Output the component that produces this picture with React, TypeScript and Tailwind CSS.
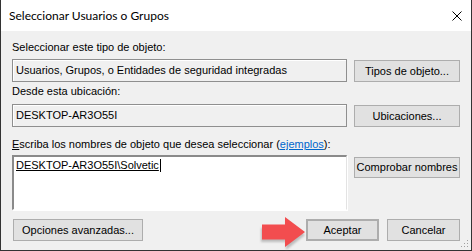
import React from "react";

const sans = { fontFamily: '"Liberation Sans", Arial, sans-serif' };

function Btn({ children, className = "" }: { children: React.ReactNode; className?: string }) {
  return (
    <div
      className={
        "flex items-center justify-center bg-[#e1e1e1] border border-[#adadad] text-[11px] text-black leading-[13px] " +
        className
      }
    >
      {children}
    </div>
  );
}

function ReadField({ text }: { text: string }) {
  return (
    <div className="flex-1 h-[23px] border border-[#8f8f8f] shadow-[inset_1px_1px_0_#ffffff] bg-[#f0f0f0] flex items-center pl-[3px] text-[11px] leading-[13px] text-black">
      {text}
    </div>
  );
}

export default function App() {
  return (
    <div className="w-[472px] h-[251px] bg-white relative overflow-hidden" style={sans}>
      <div className="flex flex-col w-[472px] h-[251px] border-l border-r border-b border-[#333333] bg-[#f0f0f0]">
        {/* Title bar */}
        <div className="h-[31px] bg-white flex items-center justify-between pl-[8px] pr-[10px] shrink-0">
          <span
            className="text-[12px] text-black leading-[16px]"
            style={{ fontFamily: 'Lato, "Noto Sans", sans-serif' }}
          >
            Seleccionar Usuarios o Grupos
          </span>
          <svg width="10" height="10" viewBox="0 0 10 10" className="mr-[-1px]">
            <path d="M0.5 0.5 L9.5 9.5 M9.5 0.5 L0.5 9.5" stroke="#000" strokeWidth="1" />
          </svg>
        </div>

        {/* Body */}
        <div className="flex flex-col pl-[11px] pr-[11px] pt-[10px] text-[11px] leading-[13px] text-black">
          <div className="h-[13px]">Seleccionar este tipo de objeto:</div>
          <div className="flex gap-[7px] mt-[5px] items-start">
            <ReadField text="Usuarios, Grupos, o Entidades de seguridad integradas" />
            <Btn className="w-[106px] h-[22px] mt-[1px]">Tipos de objeto...</Btn>
          </div>

          <div className="h-[13px] mt-[3px]">Desde esta ubicación:</div>
          <div className="flex gap-[7px] mt-[6px] items-start">
            <ReadField text="DESKTOP-AR3O55I" />
            <Btn className="w-[106px] h-[22px] mt-[1px]">Ubicaciones...</Btn>
          </div>

          <div className="h-[13px] mt-[11px]">
            <span className="underline">E</span>scriba los nombres de objeto que desea seleccionar (
            <span className="text-[#0066cc] underline">ejemplos</span>):
          </div>
          <div className="flex gap-[7px] mt-[4px] items-start">
            <div className="flex-1 h-[55px] bg-white border-t-2 border-l-2 border-t-[#8a8a8a] border-l-[#8a8a8a] border-r border-b border-r-[#e3e3e3] border-b-[#ffffff] shadow-[1px_1px_0_#ffffff] pl-[2px] pt-[2px]">
              <div className="flex items-stretch">
                <span className="underline text-black leading-[12px]">DESKTOP-AR3O55I\Solvetic</span>
                <span className="w-[1px] h-[13px] bg-black ml-[1px]" />
              </div>
            </div>
            <Btn className="w-[106px] h-[21px] mt-[2px]">Comprobar nombres</Btn>
          </div>

          <div className="flex items-start mt-[9px]">
            <Btn className="w-[130px] h-[22px] ml-[1px]">Opciones avanzadas...</Btn>
            <div className="flex-1" />
            <Btn className="w-[73px] h-[22px] border-2 border-[#0078d7]">Aceptar</Btn>
            <Btn className="w-[73px] h-[22px] ml-[8px]">Cancelar</Btn>
          </div>
        </div>
      </div>

      {/* Resize grip */}
      <svg className="absolute left-[459px] top-[238px]" width="10" height="10" viewBox="0 0 10 10">
        {[
          [8, 2],
          [5, 5],
          [8, 5],
          [2, 8],
          [5, 8],
          [8, 8],
        ].map(([x, y], i) => (
          <rect key={i} x={x} y={y} width="1" height="1" fill="#a0a0a0" />
        ))}
      </svg>

      {/* Red arrow annotation */}
      <svg className="absolute left-[256px] top-[212px]" width="54" height="39" viewBox="0 0 54 39">
        <defs>
          <filter id="sh" x="-20%" y="-20%" width="140%" height="140%">
            <feGaussianBlur stdDeviation="1.2" />
          </filter>
        </defs>
        <polygon
          points="5,14 30,14 30,6 49,21 30,36 30,28 5,28"
          fill="#9a9a9a"
          opacity="0.6"
          filter="url(#sh)"
          transform="translate(0,2)"
        />
        <polygon points="6,12.5 29,12.5 29,5 49,20 29,35 29,27.5 6,27.5" fill="#f24d4f" />
      </svg>
    </div>
  );
}
